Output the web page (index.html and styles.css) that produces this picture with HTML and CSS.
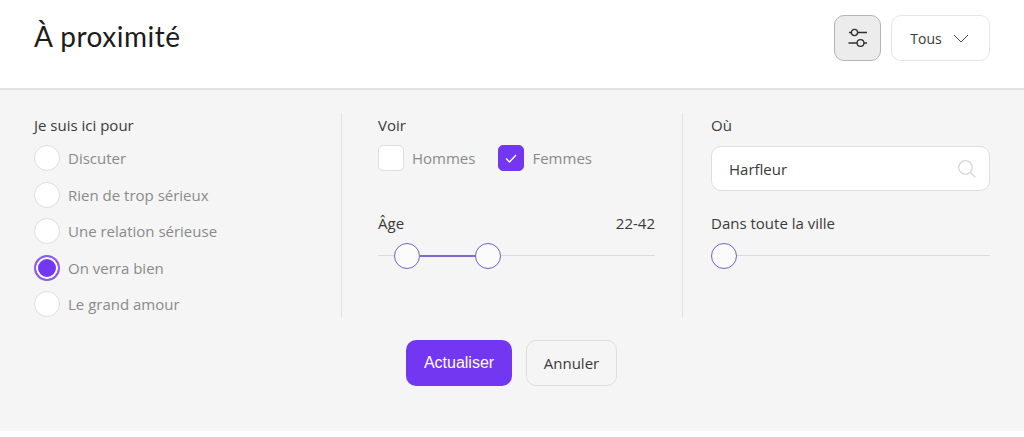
FILE: index.html
```html
<!DOCTYPE html>
<html lang="fr">
<head>
<meta charset="utf-8">
<title>À proximité</title>
<link rel="stylesheet" href="styles.css">
</head>
<body>
<header class="header">
  <h1 class="title">À proximité</h1>
  <div class="header-actions">
    <button class="icon-btn" type="button" aria-label="Filtres">
      <svg width="20" height="20" viewBox="0 0 20 20" fill="none" stroke="#2f2f2f" stroke-width="1.3">
        <circle cx="6.5" cy="4.5" r="3.1"/><path d="M1 4.5H3.4M9.6 4.5H19"/>
        <circle cx="12.5" cy="15" r="3.4"/><path d="M0.5 15H9.1M15.9 15H19"/>
      </svg>
    </button>
    <button class="select-btn" type="button">
      <span>Tous</span>
      <svg width="16" height="9" viewBox="0 0 16 9" fill="none" stroke="#4a4a4a" stroke-width="1"><path d="M1 1l7 7 7-7"/></svg>
    </button>
  </div>
</header>
<main class="panel">
  <div class="columns">
    <section class="col col-purpose">
      <div class="label">Je suis ici pour</div>
      <ul class="radio-list">
        <li class="option"><span class="radio"></span>Discuter</li>
        <li class="option"><span class="radio"></span>Rien de trop sérieux</li>
        <li class="option"><span class="radio"></span>Une relation sérieuse</li>
        <li class="option"><span class="radio radio-on"></span>On verra bien</li>
        <li class="option"><span class="radio"></span>Le grand amour</li>
      </ul>
    </section>
    <section class="col col-see">
      <div class="label">Voir</div>
      <div class="checks">
        <div class="option"><span class="check"></span>Hommes</div>
        <div class="option"><span class="check check-on">
          <svg width="14" height="11" viewBox="0 0 14 11" fill="none" stroke="#fff" stroke-width="1.4"><path d="M2 5.5l3.5 3.5L12 2"/></svg>
        </span>Femmes</div>
      </div>
      <div class="label label-row label-gap"><span>Âge</span><span>22-42</span></div>
      <div class="slider">
        <span class="range"></span>
        <span class="thumb thumb-a"></span>
        <span class="thumb thumb-b"></span>
      </div>
    </section>
    <section class="col col-where">
      <div class="label">Où</div>
      <div class="search">
        <span>Harfleur</span>
        <svg width="20" height="20" viewBox="0 0 20 20" fill="none" stroke="#d6d6d6" stroke-width="1.3"><circle cx="8.5" cy="8.5" r="6.8"/><path d="M13.5 13.5l5 5"/></svg>
      </div>
      <div class="label label-city">Dans toute la ville</div>
      <div class="slider">
        <span class="thumb thumb-c"></span>
      </div>
    </section>
  </div>
  <div class="actions">
    <button class="btn btn-primary" type="button">Actualiser</button>
    <button class="btn btn-secondary" type="button">Annuler</button>
  </div>
</main>
</body>
</html>
```
FILE: styles.css
```css
* { box-sizing: border-box; }
html, body { margin: 0; height: 437px; overflow: hidden; background: #fff; }
body { font-family: "Open Sans", "Noto Sans", sans-serif; font-size: 15px; color: #3a3a3a; }

.header {
  height: 90px;
  padding: 15px 34px 0;
  display: flex;
  justify-content: space-between;
  align-items: flex-start;
  border-bottom: 2px solid #e2e2e2;
}
.title {
  margin: 2px 0 0;
  font-family: Lato, sans-serif;
  font-size: 28px;
  line-height: 38px;
  font-weight: 400;
  letter-spacing: 0.5px;
  color: #1c1c1c;
}
.header-actions { display: flex; gap: 10px; }
.icon-btn {
  width: 47px; height: 46px; padding: 0;
  display: flex; align-items: center; justify-content: center;
  background: #ececec;
  border: 1px solid #b4b4b4;
  border-radius: 10px;
}
.select-btn {
  width: 99px; height: 46px; padding: 0 2px 0 0;
  display: flex; align-items: center; justify-content: center; gap: 11px;
  background: #fff;
  border: 1px solid #e6e6e6;
  border-radius: 10px;
  font: inherit; font-size: 14px; color: #3a3a3a;
}

.panel { height: 341px; background: #f5f5f5; padding-top: 23px; }
.columns { display: flex; height: 204px; padding-left: 34px; }
.col-purpose { width: 308px; border-right: 1px solid #e2e2e2; }
.col-see { width: 341px; padding: 0 27px 0 36px; border-right: 1px solid #e2e2e2; }
.col-where { width: 307px; padding-left: 28px; }

.label { line-height: 24px; height: 25px; color: #3a3a3a; }
.label-row { display: flex; justify-content: space-between; }
.label-gap { margin-top: 34px; }
.label-city { margin-top: 20px; }

.radio-list { list-style: none; margin: 2px 0 0; padding: 0; }
.option { display: flex; align-items: center; color: #8a8a8a; height: 36.5px; }
.radio {
  width: 26px; height: 26px; margin-right: 8px;
  border-radius: 50%;
  background: #fff;
  border: 1px solid #dedede;
}
.radio-on {
  background: #7337f2;
  border: 2px solid #8a5cf0;
  box-shadow: inset 0 0 0 2px #fff;
}

.checks { display: flex; gap: 23px; margin-top: 2px; }
.check {
  width: 26px; height: 26px; margin-right: 8px;
  display: flex; align-items: center; justify-content: center;
  background: #fff;
  border: 1px solid #dedede;
  border-radius: 5px;
}
.check-on { background: #7337f2; border-color: #7337f2; }

.slider { position: relative; height: 26px; margin-top: 7px; }
.slider::before {
  content: "";
  position: absolute; left: 0; right: 0; top: 12px;
  height: 1px; background: #dcdcdc;
}
.range {
  position: absolute; left: 29px; width: 81px; top: 12px;
  height: 2px; background: #8466cf;
}
.thumb {
  position: absolute; top: 0;
  width: 26px; height: 26px;
  border-radius: 50%;
  background: #fbfbfb;
  border: 1.5px solid #7d5cc4;
}
.thumb-a { left: 16px; }
.thumb-b { left: 97px; }
.thumb-c { left: 0; }

.search {
  height: 45px; margin-top: 8px; padding: 0 12px 0 17px;
  display: flex; align-items: center; justify-content: space-between;
  background: #fff;
  border: 1px solid #dedede;
  border-radius: 10px;
  color: #3a3a3a;
}

.actions { display: flex; justify-content: center; gap: 14px; margin-top: 23px; padding-right: 1px; }
.btn { height: 46px; border-radius: 10px; padding: 0; }
.btn-primary {
  width: 106px;
  background: #7337f2; color: #fff;
  border: 0;
  padding-bottom: 1px;
  font-family: "Liberation Sans", Arial, sans-serif;
  font-size: 16px;
}
.btn-secondary {
  width: 91px;
  background: #f5f5f5; color: #3a3a3a;
  border: 1px solid #dedede;
  font-family: "Open Sans", sans-serif;
  font-size: 15px;
}
```
